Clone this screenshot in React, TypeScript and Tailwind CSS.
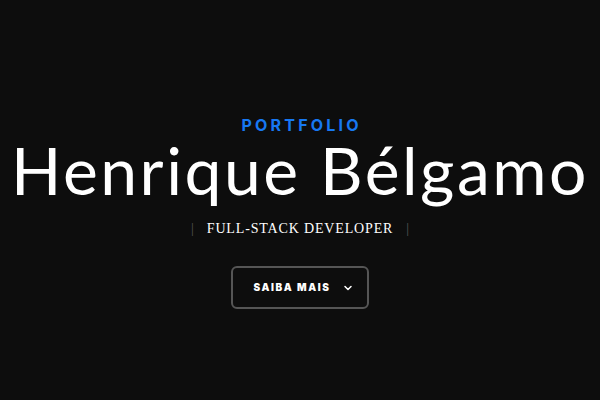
import React from 'react';
import { ChevronDown } from 'lucide-react';

export default function App() {
  return (
    <div className="min-h-screen w-full bg-[#0d0d0d] text-white flex flex-col items-center pt-[115px]">
      <p className="font-['Inter'] font-bold text-[16px] leading-5 tracking-[0.2em] text-[#1778f2] pl-[0.2em]">
        PORTFOLIO
      </p>
      <h1 className="font-['Lato'] font-normal text-[66px] leading-[70px] tracking-[2.5px] whitespace-nowrap">
        Henrique Bélgamo
      </h1>
      <div className="mt-[14px] flex items-center gap-[13px] font-['Liberation_Serif'] text-[14px] leading-5">
        <span className="text-[#555]">|</span>
        <span className="tracking-[0.06em]">FULL-STACK DEVELOPER</span>
        <span className="text-[#555]">|</span>
      </div>
      <button className="mt-[27px] w-[138px] h-[43px] pl-[8px] rounded-md border-2 border-[#555] flex items-center justify-center gap-[12px] font-['Inter'] font-black text-[10px] tracking-[0.16em]">
        SAIBA MAIS
        <ChevronDown className="w-3 h-3" strokeWidth={3} />
      </button>
    </div>
  );
}
